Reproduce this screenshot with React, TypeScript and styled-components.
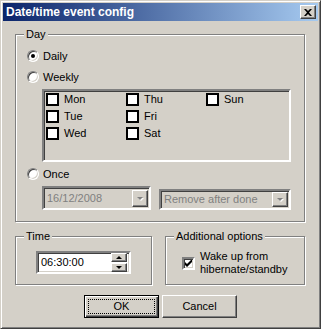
import React from 'react';
import styled, { createGlobalStyle } from 'styled-components';

const GlobalStyle = createGlobalStyle`
  html, body {
    margin: 0;
    padding: 0;
    background: #d4d0c8;
  }
  body {
    font-family: "Liberation Sans", Arial, sans-serif;
    font-size: 11px;
    color: #000;
  }
`;

const Window = styled.div`
  width: 321px;
  height: 329px;
  box-sizing: border-box;
  background: #d4d0c8;
  border: 1px solid;
  border-color: #d4d0c8 #404040 #404040 #d4d0c8;
  box-shadow: inset 1px 1px #fff, inset -1px -1px #808080;
  padding: 2px;
  display: flex;
  flex-direction: column;
`;

const TitleBar = styled.div`
  height: 18px;
  flex-shrink: 0;
  display: flex;
  align-items: center;
  background: linear-gradient(to right, #0a246a, #a6caf0);
  padding: 0 2px;
`;

const TitleText = styled.span`
  font-weight: bold;
  font-size: 12px;
  color: #fff;
  margin-left: 1px;
  line-height: 14px;
`;

const Raised = styled.div`
  box-sizing: border-box;
  background: #d4d0c8;
  border: 1px solid;
  border-color: #fff #404040 #404040 #fff;
  box-shadow: inset -1px -1px #808080;
`;

const CloseButton = styled(Raised)`
  width: 16px;
  height: 14px;
  margin-left: auto;
  display: flex;
  align-items: center;
  justify-content: center;
`;

const Body = styled.div`
  padding: 13px 0 0 12px;
  display: flex;
  flex-direction: column;
`;

const Group = styled.div<{ $w: number; $h: number }>`
  position: relative;
  box-sizing: border-box;
  width: ${(p) => p.$w}px;
  height: ${(p) => p.$h}px;
  border: 1px solid #808080;
  box-shadow: inset 1px 1px #fff, 1px 1px #fff;
`;

const Legend = styled.span`
  position: absolute;
  top: -7px;
  left: 8px;
  padding: 0 2px;
  line-height: 13px;
  background: #d4d0c8;
`;

const DayInner = styled.div`
  padding: 15px 0 0 11px;
  display: flex;
  flex-direction: column;
`;

const OptionRow = styled.label<{ $top: number }>`
  display: flex;
  align-items: center;
  gap: 4px;
  height: 12px;
  margin-top: ${(p) => p.$top}px;
  line-height: 13px;
`;

const Radio = styled.span<{ $on?: boolean }>`
  position: relative;
  width: 12px;
  height: 12px;
  box-sizing: border-box;
  border-radius: 50%;
  border: 1px solid;
  border-color: #808080 #fff #fff #808080;
  box-shadow: inset 1px 1px #404040, inset -1px -1px #d4d0c8;
  background: #fff;
  &::after {
    content: '';
    display: ${(p) => (p.$on ? 'block' : 'none')};
    position: absolute;
    left: 3px;
    top: 3px;
    width: 4px;
    height: 4px;
    border-radius: 50%;
    background: #000;
  }
`;

const Sunken = styled.div`
  box-sizing: border-box;
  border: 2px solid;
  border-color: #808080 #fff #fff #808080;
  box-shadow: inset 1px 1px #404040, inset -1px -1px #d4d0c8;
`;

const WeekPanel = styled(Sunken)`
  width: 249px;
  height: 73px;
  margin: 6px 0 0 15px;
  padding: 2px;
  display: grid;
  grid-auto-flow: column;
  grid-template-rows: repeat(3, 17px);
  grid-auto-columns: 80px;
`;

const DayCheck = styled.label`
  display: flex;
  align-items: flex-start;
  gap: 5px;
  line-height: 13px;
`;

const FlatBox = styled.span`
  width: 13px;
  height: 13px;
  box-sizing: border-box;
  border: 2px solid #000;
  background: #fff;
  flex-shrink: 0;
`;

const ComboRow = styled.div`
  display: flex;
  align-items: flex-end;
  gap: 8px;
  margin: 6px 0 0 15px;
`;

const Combo = styled(Sunken)<{ $w: number; $h: number }>`
  width: ${(p) => p.$w}px;
  height: ${(p) => p.$h}px;
  background: #d4d0c8;
  display: flex;
  align-items: center;
  padding: 0 1px 0 3px;
  color: #808080;
  line-height: 13px;
`;

const ComboText = styled.span`
  flex: 1;
`;

const DropButton = styled(Raised)<{ $h: number }>`
  width: 16px;
  height: ${(p) => p.$h}px;
  display: flex;
  align-items: center;
  justify-content: center;
`;

const Arrow = styled.span<{ $up?: boolean; $grey?: boolean }>`
  width: 0;
  height: 0;
  border-left: 3px solid transparent;
  border-right: 3px solid transparent;
  ${(p) =>
    p.$up
      ? `border-bottom: 3px solid ${p.$grey ? '#808080' : '#000'};`
      : `border-top: 3px solid ${p.$grey ? '#808080' : '#000'};`}
  ${(p) => (p.$grey ? 'filter: drop-shadow(1px 1px 0 #fff);' : '')}
`;

const GroupRow = styled.div`
  display: flex;
  gap: 13px;
  margin-top: 14px;
`;

const TimeInner = styled.div`
  padding: 14px 0 0 20px;
`;

const TimeEdit = styled(Sunken)`
  width: 95px;
  height: 23px;
  background: #fff;
  display: flex;
  align-items: center;
  padding: 0 2px 0 3px;
  line-height: 13px;
`;

const Spin = styled.div`
  margin-left: auto;
  display: flex;
  flex-direction: column;
  gap: 1px;
`;

const SpinButton = styled(Raised)`
  width: 16px;
  height: 9px;
  display: flex;
  align-items: center;
  justify-content: center;
`;

const OptionsInner = styled.div`
  padding: 13px 0 0 16px;
`;

const WakeCheck = styled.label`
  display: flex;
  align-items: center;
  gap: 5px;
  line-height: 13px;
`;

const CheckBox3D = styled(Sunken)`
  width: 13px;
  height: 13px;
  background: #fff;
  flex-shrink: 0;
  display: flex;
  align-items: center;
  justify-content: center;
`;

const ButtonRow = styled.div`
  display: flex;
  justify-content: center;
  gap: 3px;
  margin: 10px 0 0 -12px;
`;

const PushButton = styled(Raised)<{ $default?: boolean }>`
  width: 75px;
  height: 23px;
  display: flex;
  align-items: center;
  justify-content: center;
  line-height: 13px;
  position: relative;
  ${(p) =>
    p.$default
      ? `border: 1px solid #000;
         box-shadow: inset 1px 1px #fff, inset -1px -1px #404040, inset -2px -2px #808080;`
      : ''}
`;

const FocusRing = styled.span`
  position: absolute;
  inset: 3px;
  border: 1px dotted #000;
`;

const days = ['Mon', 'Tue', 'Wed', 'Thu', 'Fri', 'Sat', 'Sun'];

export default function App() {
  return (
    <>
      <GlobalStyle />
      <Window>
        <TitleBar>
          <TitleText>Date/time event config</TitleText>
          <CloseButton>
            <svg width="8" height="7" viewBox="0 0 8 7">
              <path d="M0 0h2l2 2 2-2h2L5 3.5 8 7H6L4 5 2 7H0l3-3.5z" fill="#000" />
            </svg>
          </CloseButton>
        </TitleBar>
        <Body>
          <Group $w={290} $h={188}>
            <Legend>Day</Legend>
            <DayInner>
              <OptionRow $top={0}>
                <Radio $on />
                Daily
              </OptionRow>
              <OptionRow $top={9}>
                <Radio />
                Weekly
              </OptionRow>
              <WeekPanel>
                {days.map((d) => (
                  <DayCheck key={d}>
                    <FlatBox />
                    {d}
                  </DayCheck>
                ))}
              </WeekPanel>
              <OptionRow $top={6}>
                <Radio />
                Once
              </OptionRow>
              <ComboRow>
                <Combo $w={109} $h={24}>
                  <ComboText>16/12/2008</ComboText>
                  <DropButton $h={17}>
                    <Arrow $grey />
                  </DropButton>
                </Combo>
                <Combo $w={132} $h={21}>
                  <ComboText>Remove after done</ComboText>
                  <DropButton $h={15}>
                    <Arrow $grey />
                  </DropButton>
                </Combo>
              </ComboRow>
            </DayInner>
          </Group>
          <GroupRow>
            <Group $w={137} $h={49}>
              <Legend>Time</Legend>
              <TimeInner>
                <TimeEdit>
                  06:30:00
                  <Spin>
                    <SpinButton>
                      <Arrow $up />
                    </SpinButton>
                    <SpinButton>
                      <Arrow />
                    </SpinButton>
                  </Spin>
                </TimeEdit>
              </TimeInner>
            </Group>
            <Group $w={140} $h={49}>
              <Legend>Additional options</Legend>
              <OptionsInner>
                <WakeCheck>
                  <CheckBox3D>
                    <svg width="7" height="7" viewBox="0 0 7 7">
                      <path d="M0 2v3l2 2 5-5V-1L2 4z" fill="#000" />
                    </svg>
                  </CheckBox3D>
                  <span>
                    Wake up from
                    <br />
                    hibernate/standby
                  </span>
                </WakeCheck>
              </OptionsInner>
            </Group>
          </GroupRow>
          <ButtonRow>
            <PushButton $default>
              <FocusRing />
              OK
            </PushButton>
            <PushButton>Cancel</PushButton>
          </ButtonRow>
        </Body>
      </Window>
    </>
  );
}
